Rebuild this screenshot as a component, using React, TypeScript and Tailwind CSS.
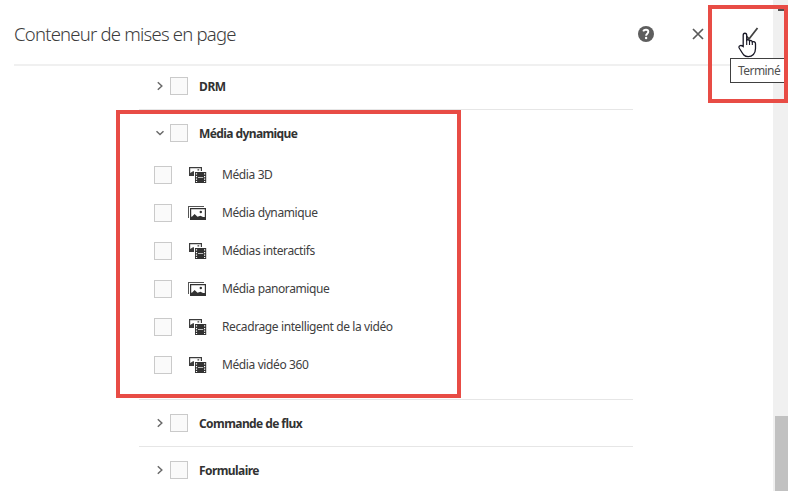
import React from "react";

function Check() {
  return <span className="block size-[18px] shrink-0 border border-[#cacaca] bg-[#fafafa]" />;
}

function Chevron({ open = false }: { open?: boolean }) {
  return (
    <svg className="mr-[5px] shrink-0" width="10" height="18" viewBox="0 0 10 18" fill="none" stroke="#6a6a6a" strokeWidth="1.5">
      <path d={open ? "M1.5 7.3 L5 10.5 L8.5 7.3" : "M2.8 5.3 L6.8 9 L2.8 12.7"} />
    </svg>
  );
}

function MixedIcon() {
  return (
    <svg width="18" height="18" viewBox="0 0 18 18">
      <path fill="#3c3c3c" d="M0 1h13v4h-1.2V2.2H1.2V7L4 5.2h1V10H0zM8.5 3.2h1.7v1.3H8.5z" />
      <path fill="#323232" d="M6 6h11.2v11H6z" />
      <path fill="#fff" d="M6.9 7.2h1.2v1.2H6.9zM6.9 10.1h1.2v1.2H6.9zM6.9 12.6h1.2v1.2H6.9zM6.9 15h1.2v1.1H6.9zM15 7.2h1.2v1.2H15zM15 10.1h1.2v1.2H15zM15 12.6h1.2v1.2H15zM15 15h1.2v1.1H15z" />
      <path fill="#cfcfcf" d="M9 11h5.2v.9H9z" />
    </svg>
  );
}

function ImagesIcon() {
  return (
    <svg className="-ml-px" width="18" height="18" viewBox="0 0 18 18">
      <path fill="#555" shapeRendering="crispEdges" d="M0 2h16v1H1v11H0z" />
      <path fill="#323232" fillRule="evenodd" d="M2 4h16v12H2zM3.2 5.2v9.6h13.6V5.2z" />
      <path fill="#323232" d="M3 12.7 4.2 12.5 6.6 10 9.5 12.8 12.5 11.8 15 13h2v2.5H3z" />
      <circle cx="12.8" cy="8" r="1.2" fill="#323232" />
    </svg>
  );
}

const items = [
  { label: "Média 3D", mixed: true },
  { label: "Média dynamique", mixed: false },
  { label: "Médias interactifs", mixed: true },
  { label: "Média panoramique", mixed: false },
  { label: "Recadrage intelligent de la vidéo", mixed: true },
  { label: "Média vidéo 360", mixed: true },
];

function Group({ label, tracking, open }: { label: string; tracking: string; open?: boolean }) {
  return (
    <div className="flex h-[46px] items-center pl-4">
      <Chevron open={open} />
      <Check />
      <span className={"ml-[11px] pt-px text-[12px] font-bold text-[#323232] " + tracking}>{label}</span>
    </div>
  );
}

export default function App() {
  return (
    <div className="relative flex h-[491px] w-[788px] overflow-hidden bg-white font-['Noto_Sans',sans-serif] whitespace-nowrap">
      <div className="w-[773px] shrink-0">
        <header className="ml-[14px] flex h-[66px] items-center border-b-2 border-[#f0f0f0] pt-1">
          <h1 className="w-[624px] text-[18.5px] font-light tracking-[-0.78px] text-[#3c3c3c]">Conteneur de mises en page</h1>
          <svg width="16" height="16" viewBox="0 0 16 16">
            <circle cx="8" cy="8" r="8" fill="#5e5e5e" />
            <path d="M5.2 5.3C6 3.2 10.3 3.1 10.3 5.8c0 1.9-2.2 2-2.2 4" fill="none" stroke="#fff" strokeWidth="1.9" />
            <circle cx="8.1" cy="12" r="1.2" fill="#fff" />
          </svg>
          <svg className="ml-[38px]" width="12" height="12" viewBox="0 0 12 12" fill="none" stroke="#5a5a5a" strokeWidth="1.7">
            <path d="M1 1l10 10M11 1 1 11" />
          </svg>
          <svg className="ml-[39px]" width="16" height="14" viewBox="0 0 16 14" fill="none" stroke="#424242" strokeWidth="1.8">
            <path d="M1 7l5 5L14.5 1" />
          </svg>
        </header>
        <main className="ml-[139px] w-[494px]">
          <div className="-mt-[3px] border-b border-[#e6e6e6]">
            <Group label="DRM" tracking="tracking-[-0.4px]" />
          </div>
          <div className="h-[290px] border-b border-[#e6e6e6]">
            <Group label="Média dynamique" tracking="tracking-[-0.59px]" open />
            <ul>
              {items.map((item) => (
                <li key={item.label} className="flex h-[38px] items-center pl-[15px]">
                  <Check />
                  <span className="ml-[17px] w-[33px]">{item.mixed ? <MixedIcon /> : <ImagesIcon />}</span>
                  <span className="text-[12px] tracking-[-0.39px] text-[#404040]">{item.label}</span>
                </li>
              ))}
            </ul>
          </div>
          <div className="border-b border-[#e6e6e6]">
            <Group label="Commande de flux" tracking="tracking-[-0.58px]" />
          </div>
          <Group label="Formulaire" tracking="tracking-[-0.57px]" />
        </main>
      </div>
      <aside className="flex w-[15px] flex-col items-end bg-[#f0f0f0]">
        <div className="mt-[416px] h-[75px] w-[13px] bg-[#c1c1c1]" />
      </aside>
      <div className="absolute top-[9px] left-[778px] h-[2px] w-[6px] bg-[#505050]" />
      <div className="absolute top-[110px] left-[116px] h-[288px] w-[345px] border-4 border-[#e84c45]" />
      <div className="absolute top-[58px] left-[730px] flex h-[25px] w-[60px] items-center border border-[#404040] bg-white pl-[7px] text-[12px] tracking-[-0.55px] text-[#505050]">Terminé</div>
      <svg className="absolute top-[32px] left-[738px]" width="19" height="26" viewBox="0 0 19 26">
        <path d="M5.2 14.5V3.2c0-2.6 3.5-2.6 3.5 0v5c1-.9 2.6-.5 2.8.7 1-.8 2.6-.2 2.8.9 1.6-.6 3.2.2 3.2 2v4.8c0 5-3.2 8-7.3 8-4.5 0-5.6-3-9-8.6-1-2 1.4-3.6 4-1.5z" fill="#fff" stroke="#171725" strokeWidth="1.3" />
        <path d="M8.7 8v5M11.5 8.9V13M14.3 9.8V13" stroke="#171725" strokeWidth="1.1" />
      </svg>
      <div className="absolute top-[5px] left-[708px] h-[98px] w-[80px] border-4 border-[#e84c45]" />
    </div>
  );
}
